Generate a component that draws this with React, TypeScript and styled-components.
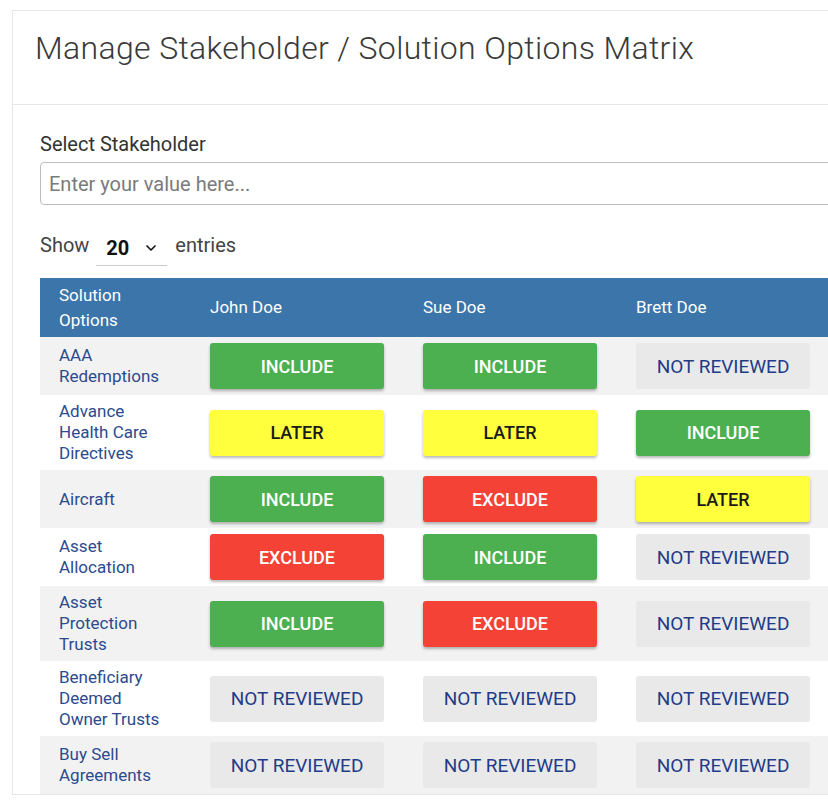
import React from 'react'
import styled, { createGlobalStyle } from 'styled-components'
import { ChevronDown } from 'lucide-react'

const GlobalStyle = createGlobalStyle`
  html, body {
    margin: 0;
    padding: 0;
    background: #ffffff;
    overflow: hidden;
  }
  body {
    font-family: Roboto, "Liberation Sans", sans-serif;
    color: #333333;
  }
`

type Status = 'include' | 'exclude' | 'later' | 'none'

const statusStyle: Record<
  Status,
  { bg: string; fg: string; shadow: string; weight: number; size: number; label: string }
> = {
  include: { bg: '#4caf50', fg: '#ffffff', shadow: '0 2px 3px rgba(0,0,0,0.28)', weight: 500, size: 18, label: 'INCLUDE' },
  exclude: { bg: '#f44336', fg: '#ffffff', shadow: '0 2px 3px rgba(0,0,0,0.28)', weight: 500, size: 18, label: 'EXCLUDE' },
  later: { bg: '#ffff3d', fg: '#1a1a1a', shadow: '0 2px 3px rgba(0,0,0,0.28)', weight: 500, size: 18, label: 'LATER' },
  none: { bg: '#e9e9e9', fg: '#1f3c88', shadow: 'none', weight: 400, size: 19, label: 'NOT REVIEWED' },
}

const stakeholders = ['John Doe', 'Sue Doe', 'Brett Doe']

const rows: { option: string; values: Status[] }[] = [
  { option: 'AAA Redemptions', values: ['include', 'include', 'none'] },
  { option: 'Advance Health Care Directives', values: ['later', 'later', 'include'] },
  { option: 'Aircraft', values: ['include', 'exclude', 'later'] },
  { option: 'Asset Allocation', values: ['exclude', 'include', 'none'] },
  { option: 'Asset Protection Trusts', values: ['include', 'exclude', 'none'] },
  { option: 'Beneficiary Deemed Owner Trusts', values: ['none', 'none', 'none'] },
  { option: 'Buy Sell Agreements', values: ['none', 'none', 'none'] },
]

const Page = styled.div`
  width: 828px;
  height: 805px;
  overflow: hidden;
  padding: 10px 0 0 12px;
  box-sizing: border-box;
`

const Card = styled.div`
  width: 900px;
  border: 1px solid #e6e6e6;
  background: #ffffff;
`

const CardHeader = styled.div`
  height: 94px;
  padding: 0 22px;
  display: flex;
  align-items: center;
  border-bottom: 1px solid #e6e6e6;
  box-sizing: border-box;
`

const Title = styled.h1`
  margin: 0 0 20px;
  font-size: 32px;
  font-weight: 300;
  color: #3a3a3a;
  letter-spacing: 0.35px;
`

const CardBody = styled.div`
  padding: 27px 27px 0;
`

const FieldLabel = styled.label`
  display: block;
  font-size: 20px;
  color: #333333;
  margin-bottom: 6px;
`

const TextInput = styled.input`
  width: 100%;
  height: 43px;
  box-sizing: border-box;
  border: 1px solid #bdbdbd;
  border-radius: 4px;
  padding: 0 8px;
  font-family: Roboto, "Liberation Sans", sans-serif;
  font-size: 20px;
  color: #333;
  &::placeholder {
    color: #7a7a7a;
  }
`

const LengthRow = styled.div`
  display: flex;
  align-items: center;
  gap: 7px;
  margin: 19px 0 12px;
  font-size: 20px;
  color: #444;
`

const SelectBox = styled.div`
  display: flex;
  align-items: center;
  gap: 14px;
  width: 71px;
  height: 36px;
  box-sizing: border-box;
  padding: 0 0 0 10px;
  border-bottom: 1px solid #cccccc;
  margin-top: 6px;
  margin-right: 1px;
  font-weight: 700;
  color: #111;
`

const Table = styled.table`
  border-collapse: collapse;
  table-layout: fixed;
  width: 790px;
`

const HeadCell = styled.th<{ $w: number }>`
  width: ${(p) => p.$w}px;
  background: #3b75a9;
  color: #ffffff;
  font-size: 17px;
  font-weight: 400;
  text-align: left;
  line-height: 25px;
  height: 59px;
  padding: 4px 19px;
  box-sizing: border-box;
`

const BodyRow = styled.tr<{ $striped: boolean }>`
  background: ${(p) => (p.$striped ? '#f2f2f2' : '#ffffff')};
`

const OptionCell = styled.td`
  padding: 6px 19px;
  font-size: 17px;
  line-height: 21px;
  color: #2c4a8e;
  vertical-align: middle;
`

const StatusCell = styled.td`
  padding: 6px 20px 6px 19px;
  vertical-align: middle;
`

const StatusButton = styled.button<{ $s: Status }>`
  display: flex;
  align-items: center;
  justify-content: center;
  width: 174px;
  height: 46px;
  border: none;
  border-radius: 3px;
  background: ${(p) => statusStyle[p.$s].bg};
  color: ${(p) => statusStyle[p.$s].fg};
  box-shadow: ${(p) => statusStyle[p.$s].shadow};
  font-family: Roboto, "Liberation Sans", sans-serif;
  font-size: ${(p) => statusStyle[p.$s].size}px;
  font-weight: ${(p) => statusStyle[p.$s].weight};
  cursor: pointer;
`

export default function App() {
  return (
    <>
      <GlobalStyle />
      <Page>
        <Card>
          <CardHeader>
            <Title>Manage Stakeholder / Solution Options Matrix</Title>
          </CardHeader>
          <CardBody>
            <FieldLabel>Select Stakeholder</FieldLabel>
            <TextInput placeholder="Enter your value here..." />
            <LengthRow>
              <span>Show</span>
              <SelectBox>
                20 <ChevronDown size={16} strokeWidth={2.5} />
              </SelectBox>
              <span>entries</span>
            </LengthRow>
            <Table>
              <thead>
                <tr>
                  <HeadCell $w={151}>Solution Options</HeadCell>
                  {stakeholders.map((s) => (
                    <HeadCell key={s} $w={213}>
                      {s}
                    </HeadCell>
                  ))}
                </tr>
              </thead>
              <tbody>
                {rows.map((r, i) => (
                  <BodyRow key={r.option} $striped={i % 2 === 0}>
                    <OptionCell>{r.option}</OptionCell>
                    {r.values.map((v, j) => (
                      <StatusCell key={j}>
                        <StatusButton $s={v}>{statusStyle[v].label}</StatusButton>
                      </StatusCell>
                    ))}
                  </BodyRow>
                ))}
              </tbody>
            </Table>
          </CardBody>
        </Card>
      </Page>
    </>
  )
}
